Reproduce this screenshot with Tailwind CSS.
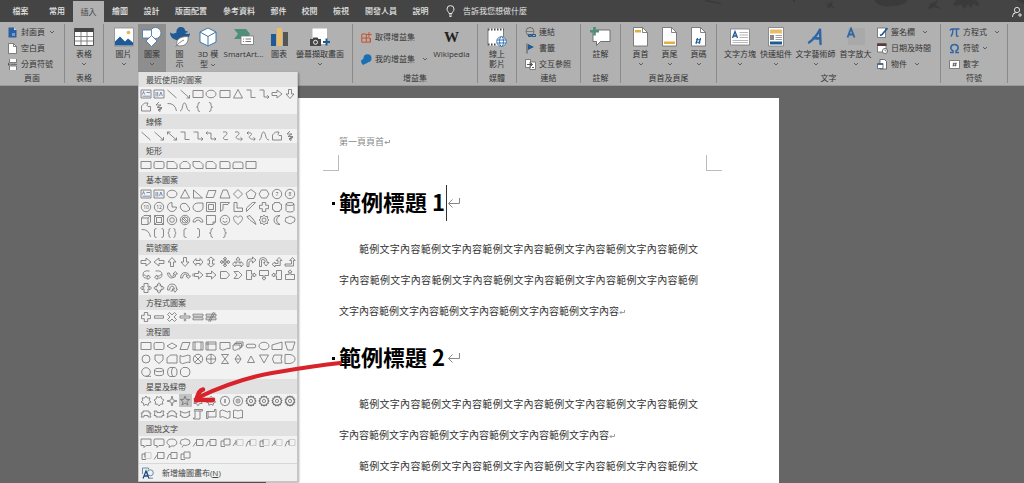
<!DOCTYPE html>
<html lang="zh-Hant">
<head>
<meta charset="utf-8">
<title>Word</title>
<script src="https://cdn.jsdelivr.net/npm/@tailwindcss/browser@4"></script>
</head>
<body class="h-screen overflow-hidden flex flex-col bg-[#666] text-[8px] leading-[10px] text-[#333] font-['Open_Sans','Noto_Sans_CJK_TC',sans-serif]">

<!-- shared chevron -->
<svg class="hidden"><symbol id="chev" viewBox="0 0 6 4"><path d="M1 1l2 2 2-2" fill="none" stroke="#555" stroke-width=".9"/></symbol></svg>

<header class="relative flex shrink-0 h-[22px] items-stretch bg-[#444] text-[#e4e4e4] overflow-hidden">
  <nav class="flex">
    <button class="w-[41px] font-medium">檔案</button>
    <button class="w-8 font-medium">常用</button>
    <button class="w-[31px] mt-px bg-[#b1b1b1] text-[#444]">插入</button>
    <button class="w-8 font-medium">繪圖</button>
    <button class="w-[31px] font-medium">設計</button>
    <button class="w-12 font-medium">版面配置</button>
    <button class="w-12 font-medium">參考資料</button>
    <button class="w-[31px] font-medium">郵件</button>
    <button class="w-[31px] font-medium">校閱</button>
    <button class="w-8 font-medium">檢視</button>
    <button class="w-12 font-medium">開發人員</button>
    <button class="w-[31px] font-medium">說明</button>
  </nav>
  <button class="flex items-center gap-2 ml-[10px]">
    <svg class="w-[9px] h-3" viewBox="0 0 9 12" fill="none" stroke="#e8e8e8"><path d="M3 8.5C3 7 1 6.2 1 4.1a3.5 3.5 0 0 1 7 0C8 6.200 6 7 6 8.500zM3 10h3M3.500 11.500h2"/></svg>
    <span>告訴我您想做什麼</span>
  </button>
  <svg class="ml-auto w-[320px] h-[22px]" viewBox="0 0 320 22" fill="#3a3a3a">
    <path d="M2 0l16 3-2 1L0 1zM88 0h3v3zM120 2l4 2 5-3-1 4 3 3-4-1-4 1 1-3zM170 0q5 8 18 6 12 0 16-6zM219 0l7 4 8-4-2 5 5 4-4-1-3-1-4 2-2-1 2-4zM249 5l3-5h20l4 5-4 1-2-3-3 5-3-4-4 5-3-5-4 2zM312 0h8v4z"/>
    <g fill="none" stroke="#ddd" stroke-width="1"><circle cx="313" cy="10" r="2.600"/><path d="M308.500 17c0-3 2-4.500 4.500-4.500M314 15h4M316 13v4M311 13l-2 1"/></g>
  </svg>
</header>

<section class="relative z-10 flex shrink-0 h-16 pt-0.5 pb-0.5 bg-[#b1b1b1] border-b border-[#9a9a9a] text-center whitespace-nowrap">

  <div class="flex flex-col w-[65px] border-r border-[#8a8a8a]">
    <div class="h-[51px] flex flex-col pl-2 text-left">
      <button class="h-4 flex items-center gap-1"><svg class="w-[9px] h-[11px]" viewBox="0 0 9 11"><path d="M.5.5h5.500l2.500 2.500v7.500h-8z" fill="#2b5f9e"/><path d="M6 .5V3h2.500z" fill="#cfe0f2"/><path d="M4 6h3v3H4z" fill="#6f9bd0"/></svg>封面頁<svg class="w-1.5 h-1"><use href="#chev"/></svg></button>
      <button class="h-4 flex items-center gap-1"><svg class="w-[9px] h-[11px]" viewBox="0 0 9 11"><path d="M.5.5h5l3 3v7h-8z" fill="#fff" stroke="#666" stroke-width=".8"/><path d="M5.500.5v3h3" fill="none" stroke="#666" stroke-width=".8"/></svg>空白頁</button>
      <button class="h-4 flex items-center gap-1"><svg class="w-[9px] h-[11px]" viewBox="0 0 9 11"><path d="M1.500 0v3.500h7V0M1.500 11V7h7v4" fill="#fff" stroke="#666" stroke-width=".8"/><path d="M2.500 5.300H9" stroke="#666"/><path d="M0 3.500l2 1.800-2 1.800z" fill="#555"/></svg>分頁符號</button>
    </div>
    <div>頁面</div>
  </div>

  <div class="flex flex-col w-[39px] border-r border-[#8a8a8a]">
    <button class="h-[51px] pt-[3px] flex flex-col items-center">
      <svg class="w-5 h-5 mb-0.5" viewBox="0 0 20 20"><path d="M.5 1.500h19v17H.5z" fill="#fff" stroke="#555"/><path d="M.5 1h19v4H.5z" fill="#444"/><path d="M1 9.500h18M1 14h18M7 5v13M13 5v13" stroke="#777" stroke-width=".9"/></svg>
      表格<svg class="w-1.5 h-1 mt-[3px]"><use href="#chev"/></svg></button>
    <div>表格</div>
  </div>

  <div class="flex flex-col w-[249px] border-r border-[#8a8a8a]">
    <div class="h-[51px] flex pl-[5px]">
      <button class="w-[29px] pt-[3px] flex flex-col items-center">
        <svg class="w-5 h-5 mb-0.5" viewBox="0 0 20 20"><path d="M.5 1h19v18H.5z" fill="#fff" stroke="#888" stroke-width=".8"/><path d="M1 18.500v-4l5-5 5 5 3-3 5 4v3z" fill="#1f5a94"/><circle cx="14.500" cy="5.500" r="1.800" fill="#e9b44a"/></svg>
        圖片<svg class="w-1.5 h-1 mt-[3px]"><use href="#chev"/></svg></button>
      <div class="relative">
        <button class="w-7 h-12 pt-[3px] flex flex-col items-center bg-[#8e8e8e]" aria-expanded="true">
          <svg class="w-5 h-5 mb-0.5" viewBox="0 0 20 20" fill="#fff" stroke="#4d7ba8" stroke-width=".9"><circle cx="13.500" cy="6" r="5.500"/><path d="M.5 3h9v8h-9z"/><path d="M9.500 8.500l5.500 5.500-5.500 5.500L4 14z"/></svg>
          圖案<svg class="w-1.5 h-1 mt-[3px]"><use href="#chev"/></svg></button>

        <!-- shapes gallery -->
        <div class="absolute left-0 top-12 w-[160px] bg-[#f2f2f2] border border-t-0 border-[#c6c6c6] shadow-[1px_1px_2px_#0005] text-left">
          <div id="gallery"></div>
          <button class="flex items-center gap-2 w-full h-[18px] px-[3px] border-t border-[#d8d8d8] bg-[#f0f0f0] text-[#444]">
            <svg class="w-3 h-3" viewBox="0 0 12 12" fill="none" stroke="#5b7fa8" stroke-width=".9"><path d="M.5 7V1h6v1.500"/><circle cx="8.300" cy="5.800" r="3"/><path d="M1 11.500L4 4l3 7.500M2 9h4" stroke="#1f4e85" stroke-width="1.300"/><path d="M7 11.200h4"/></svg>
            <span>新增繪圖畫布(<u>N</u>)</span>
          </button>
        </div>
      </div>
      <button class="w-[27px] pt-[3px] flex flex-col items-center">
        <svg class="w-5 h-5 mb-0.5" viewBox="0 0 20 20"><path d="M0 5.500C2 7 4 7 6.500 5.500 6 2 8.500 0 11 0s4 1.500 4 3.500L18.500 5 15 6q1 1 3 1c1 0 1.500-.5 2-1 0 4-3 7-8 7.500C5 14 0 11 0 5.500z" fill="#1f5a94"/><path d="M7 18.500C5.500 13 9 9.500 18 9.500c1 6-3 11-11 9M5.500 20c2-3 5-5.500 8.500-7" fill="#fff" stroke="#777" stroke-width=".9"/></svg>
        <span>圖<br>示</span></button>
      <button class="w-[30px] pt-[3px] flex flex-col items-center">
        <svg class="w-5 h-5 mb-0.5" viewBox="0 0 20 20" fill="#fff" stroke="#3a76a8" stroke-width="1"><path d="M10 1l8 4v10l-8 4-8-4V5z"/><path d="M2 5l8 4.500L18 5M10 9.500V19" fill="none"/></svg>
        <span>3D 模<br>型 <svg class="w-1.5 h-1 inline-block align-middle"><use href="#chev"/></svg></span></button>
      <button class="w-[41px] pt-[3px] flex flex-col items-center">
        <svg class="w-5 h-5 mb-0.5" viewBox="0 0 20 20"><path d="M0 2h12l4 5-3 5H0l4-5z" fill="#4f8f77"/><path d="M7 9h12.500v8.500H7z" fill="#fff" stroke="#777" stroke-width=".8"/><path d="M9 12h1M11.500 12H17M9 14.500h1M11.500 14.500H17" stroke="#777"/></svg>
        SmartArt...</button>
      <button class="w-[30px] pt-[3px] flex flex-col items-center">
        <svg class="w-5 h-5 mb-0.5" viewBox="0 0 20 20"><path d="M2 7h5v12H2z" fill="#1f5a94"/><path d="M8 1h5v18H8z" fill="#e8bd6a"/><path d="M14 5h5v14h-5z" fill="#555"/></svg>
        圖表</button>
      <button class="w-[52px] pt-[3px] flex flex-col items-center">
        <svg class="w-5 h-5 mb-0.5" viewBox="0 0 20 20"><path d="M2.500 1.500H17V17H2.500z" fill="#fff"/><path d="M0 12h2.500l1-1.500h4L8.500 12H11v7H0z" fill="#444"/><circle cx="5.500" cy="15.300" r="2" fill="#444" stroke="#fff" stroke-width=".9"/><path d="M16.500 11.500v7M13 15h7" stroke="#1f5a94" stroke-width="2"/></svg>
        螢幕擷取畫面<svg class="w-1.5 h-1 mt-[3px]"><use href="#chev"/></svg></button>
    </div>
  </div>

  <div class="flex flex-col w-[125px] border-r border-[#8a8a8a]">
    <div class="h-[51px] flex pl-2">
      <div class="flex flex-col pt-0.5 text-left w-[70px]">
        <button class="h-[22px] flex items-center gap-[3px]"><svg class="w-[11px] h-[11px]" viewBox="0 0 11 11" fill="none" stroke="#c8512c" stroke-width="1"><path d="M.8 2h4.500v8.200H.8zM.8 6h8.500v4.200H5.300M9.300 6v4.200M8 0v5M5.700 2.500h5"/></svg>取得增益集</button>
        <button class="h-[22px] flex items-center gap-[3px]"><svg class="w-[11px] h-[11px]" viewBox="0 0 11 11" fill="#1a6fb5"><circle cx="6.500" cy="4.300" r="4"/><path d="M0 6.500l4-3 3 5-5 2.500q-2-1-2-4.500"/></svg>我的增益集<svg class="w-1.5 h-1 ml-1"><use href="#chev"/></svg></button>
      </div>
      <button class="w-[41px] pt-[3px] flex flex-col items-center">
        <span class="h-5 mb-0.5 leading-5 text-[15px] font-bold text-[#222] font-['Liberation_Serif',serif]">W</span>
        Wikipedia</button>
    </div>
    <div>增益集</div>
  </div>

  <div class="flex flex-col w-[39px] border-r border-[#8a8a8a]">
    <button class="h-[51px] pt-[3px] flex flex-col items-center">
      <svg class="w-5 h-5 mb-0.5" viewBox="0 0 20 20"><path d="M1 1.500h15.500v17H1z" fill="#fff"/><path d="M1 2.500h16M1 17.500h9" stroke="#444" stroke-width="2" stroke-dasharray="1.500 1.500"/><path d="M1 1.500v17M16.500 1.500v9" stroke="#666" stroke-width=".8"/><g fill="#fff" stroke="#2f6ca8" stroke-width=".9"><circle cx="14.500" cy="14.500" r="4.800"/><ellipse cx="14.500" cy="14.500" rx="2" ry="4.800"/><path d="M10 13h9M10 16h9" /></g></svg>
      <span>線上<br>影片</span></button>
    <div>媒體</div>
  </div>

  <div class="flex flex-col w-16 border-r border-[#8a8a8a]">
    <div class="h-[51px] flex flex-col pl-2 text-left">
      <button class="h-4 flex items-center gap-[3px]"><svg class="w-[11px] h-[11px]" viewBox="0 0 11 11" fill="none"><circle cx="5" cy="4.500" r="4" fill="#ddd" stroke="#555" stroke-width=".8"/><path d="M1 4.500h8M5 .5v8M3 1v7M7 1v7" stroke="#555" stroke-width=".6"/><path d="M3.500 7.500h3v2h-3zM7.500 7.500h3v2h-3z" stroke="#1f5a94" stroke-width="1"/></svg>連結</button>
      <button class="h-4 flex items-center gap-[3px]"><svg class="w-[11px] h-[11px]" viewBox="0 0 11 11"><path d="M2 .5v10" stroke="#555"/><path d="M3 1l6 3-6 3z" fill="#1f5a94"/></svg>書籤</button>
      <button class="h-4 flex items-center gap-[3px]"><svg class="w-[11px] h-[11px]" viewBox="0 0 11 11" fill="#fff" stroke="#666" stroke-width=".8"><path d="M.5.5h5v8h-5zM5 3h5.500v7.500H5z"/><path d="M2 5.500h5.500M6 4l1.500 1.500L6 7M7 8.500h2" stroke="#333"/></svg>交互參照</button>
    </div>
    <div>連結</div>
  </div>

  <div class="flex flex-col w-10 border-r border-[#8a8a8a]">
    <button class="h-[51px] pt-[3px] flex flex-col items-center">
      <svg class="w-[21px] h-5 mb-0.5" viewBox="0 0 21 20"><path d="M3 3h17v11.500H10.500L6.500 18.500v-4H3z" fill="#fff" stroke="#666" stroke-width=".9"/><path d="M4.500 0v8.500M0 4.200h9" stroke="#4f8f77" stroke-width="2.600"/></svg>
      註解</button>
    <div>註解</div>
  </div>

  <div class="flex flex-col w-24 border-r border-[#8a8a8a]">
    <div class="h-[51px] flex pl-[5px]">
      <button class="w-[29px] pt-[3px] flex flex-col items-center">
        <svg class="w-[15px] h-5 mb-0.5" viewBox="0 0 15 20"><path d="M.5.5h9l5 5v13.500H.5z" fill="#fff" stroke="#666" stroke-width=".8"/><path d="M9.500.5v5h5" fill="none" stroke="#666" stroke-width=".8"/><path d="M2 3h6v2.500H2z" fill="#e0b040"/></svg>
        頁首<svg class="w-1.5 h-1 mt-[3px]"><use href="#chev"/></svg></button>
      <button class="w-[29px] pt-[3px] flex flex-col items-center">
        <svg class="w-[15px] h-5 mb-0.5" viewBox="0 0 15 20"><path d="M.5.5h9l5 5v13.500H.5z" fill="#fff" stroke="#666" stroke-width=".8"/><path d="M9.500.5v5h5" fill="none" stroke="#666" stroke-width=".8"/><path d="M2 14.500h11V17H2z" fill="#e0b040"/></svg>
        頁尾<svg class="w-1.5 h-1 mt-[3px]"><use href="#chev"/></svg></button>
      <button class="w-[29px] pt-[3px] flex flex-col items-center">
        <svg class="w-[15px] h-5 mb-0.5" viewBox="0 0 15 20"><path d="M.5.5h9l5 5v13.500H.5z" fill="#fff" stroke="#666" stroke-width=".8"/><path d="M9.500.5v5h5" fill="none" stroke="#666" stroke-width=".8"/><path d="M6.500 11L5 17M9.500 11L8 17M5 12.800h5M4.500 15.200h5" stroke="#1f5a94" stroke-width="1.100"/></svg>
        頁碼<svg class="w-1.5 h-1 mt-[3px]"><use href="#chev"/></svg></button>
    </div>
    <div>頁首及頁尾</div>
  </div>

  <div class="flex flex-col w-56 border-r border-[#8a8a8a]">
    <div class="h-[51px] flex pl-[5px]">
      <button class="w-9 pt-[3px] flex flex-col items-center">
        <svg class="w-5 h-5 mb-0.5" viewBox="0 0 20 20"><path d="M.5 2h19v16H.5z" fill="#fff" stroke="#777" stroke-width=".8"/><path d="M2.500 11L5 4.500 7.500 11M3.500 9h3" fill="none" stroke="#1f5a94" stroke-width="1.300"/><path d="M9.500 5.500H18M9.500 8H18M9.500 10.500H18M2.500 13.500H18M2.500 15.500H18" stroke="#999" stroke-width=".7"/></svg>
        文字方塊<svg class="w-1.5 h-1 mt-[3px]"><use href="#chev"/></svg></button>
      <button class="w-9 pt-[3px] flex flex-col items-center">
        <svg class="w-4 h-5 mb-0.5" viewBox="0 0 16 20"><path d="M.5.5h15v18.500H.5z" fill="#fff" stroke="#777" stroke-width=".8"/><path d="M2 2.500h12v4H2z" fill="#e8bd6a"/><path d="M2 8h4v5H2z" fill="#888"/><path d="M7.500 8.500H14M7.500 10.500H14M7.500 12.500H14" stroke="#888" stroke-width=".8"/><path d="M2 14.500h12v3H2z" fill="#1f5a94"/></svg>
        快速組件<svg class="w-1.5 h-1 mt-[3px]"><use href="#chev"/></svg></button>
      <button class="w-[43px] pt-[3px] flex flex-col items-center">
        <svg class="w-5 h-5 mb-0.5" viewBox="0 0 20 20"><path d="M3 15.500C7 13 11 8 14 2.500l.5 14.500M7.500 11c3 .5 4 .5 7 .5" fill="none" stroke="#2f66a3" stroke-width="2.400" stroke-linecap="round" stroke-linejoin="round"/></svg>
        文字藝術師<svg class="w-1.5 h-1 mt-[3px]"><use href="#chev"/></svg></button>
      <button class="w-[37px] pt-[3px] flex flex-col items-center">
        <svg class="w-5 h-5 mb-0.5" viewBox="0 0 20 20"><path d="M2 1h17v17H2z" fill="#a9a9a9"/><path d="M1.500 10.500l3.500-9 3.500 9M2.800 7.500h4.400" fill="none" stroke="#2f66a3" stroke-width="1.800"/></svg>
        首字放大<svg class="w-1.5 h-1 mt-[3px]"><use href="#chev"/></svg></button>
      <div class="flex flex-col pl-[3px] text-left">
        <button class="h-4 flex items-center gap-[3px]"><svg class="w-[11px] h-[11px]" viewBox="0 0 11 11"><path d="M.5 1h8v9.500h-8z" fill="#fff" stroke="#666" stroke-width=".8"/><path d="M10.500 1L5 7.500l-2 1" fill="none" stroke="#1f5a94" stroke-width="1.600"/></svg>簽名欄<svg class="w-1.5 h-1 ml-1"><use href="#chev"/></svg></button>
        <button class="h-4 flex items-center gap-[3px]"><svg class="w-[11px] h-[11px]" viewBox="0 0 11 11" fill="#fff"><path d="M.5.8h8.500V9H.5z" stroke="#666" stroke-width=".8"/><path d="M.1.4H9.400V3H.1z" fill="#5a3a34"/><circle cx="8" cy="8" r="2.600" stroke="#555" stroke-width=".8"/><path d="M8 6.500V8h1.500" fill="none" stroke="#555" stroke-width=".7"/></svg>日期及時間</button>
        <button class="h-4 flex items-center gap-[3px]"><svg class="w-[11px] h-[11px]" viewBox="0 0 11 11" fill="#fff" stroke="#555" stroke-width=".8"><path d="M3 .5h4.500l2 2V10H3z"/><path d="M.5 4.500H6v5H.5z"/><path d="M.5 5.200H6" stroke="#1f5a94" stroke-width="1.300"/></svg>物件<svg class="w-1.5 h-1 ml-1"><use href="#chev"/></svg></button>
      </div>
    </div>
    <div>文字</div>
  </div>

  <div class="flex flex-col w-[67px] border-r border-[#8a8a8a]">
    <div class="h-[51px] flex flex-col pl-2 text-left">
      <button class="h-4 flex items-center gap-[3px]"><svg class="w-[11px] h-[11px]" viewBox="0 0 11 11" fill="none" stroke="#2f66a3" stroke-width="1.400"><path d="M1 3.500q.5-1.500 2-1.500h7.500M4 2q0 5-2 7.500M7.500 2v6q0 1.500 2 1.300"/></svg>方程式<svg class="w-1.5 h-1 ml-1"><use href="#chev"/></svg></button>
      <button class="h-4 flex items-center gap-[3px]"><svg class="w-[11px] h-[11px]" viewBox="0 0 11 11" fill="none" stroke="#2f66a3" stroke-width="1.500"><path d="M1 9.500h3V8C.5 6 1.500 1.500 5.500 1.500S10.500 6 7 8v1.500h3"/></svg>符號<svg class="w-1.5 h-1"><use href="#chev"/></svg></button>
      <button class="h-4 flex items-center gap-[3px]"><svg class="w-[11px] h-[11px]" viewBox="0 0 11 11"><path d="M.5 1.500h10v8H.5z" fill="#fff" stroke="#666" stroke-width=".8"/><path d="M5 3.500l-.8 4M7 3.500l-.8 4M3.800 4.700h4M3.500 6.300h4" stroke="#444" stroke-width=".7"/></svg>數字</button>
    </div>
    <div>符號</div>
  </div>
</section>

<main class="flex-1 min-h-0 flex justify-center items-start pt-3 pl-[21px] overflow-hidden">
  <article class="w-[513px] shrink-0 min-h-full bg-white pt-[38px] text-[#333]">
    <div class="pl-[73px] h-3 flex items-center text-[9px] text-[#888]">第一頁頁首<svg class="w-1.5 h-1.5" viewBox="0 0 6 6" fill="none" stroke="#888" stroke-width=".8"><path d="M5.500 1v2.500H1M2.500 2L1 3.500 2.500 5"/></svg></div>
    <div class="mt-[7px] px-[57px] flex justify-between">
      <div class="w-4 h-4 border-r border-b border-[#bbb]"></div>
      <div class="w-4 h-4 border-l border-b border-[#bbb]"></div>
    </div>
    <h1 class="mt-[14px] pl-[66px] h-9 flex items-center text-[22px] leading-8 font-bold text-black font-['Noto_Sans_CJK_TC',sans-serif]">
      <span class="w-[3px] h-[3px] mr-1 bg-black"></span><span class="pb-1">範例標題 1</span><span class="w-px h-9 ml-px bg-[#333]"></span>
      <svg class="w-[14px] h-3" viewBox="0 0 14 12" fill="none" stroke="#888" stroke-width="1"><path d="M12.500 1v5.500H1.500M5.500 2.500l-4 4 4 4"/></svg></h1>
    <p class="mt-[13px] ml-[73px] w-[359px] text-justify indent-5 text-[10px] leading-[31px]">範例文字內容範例文字內容範例文字內容範例文字內容範例文字內容範例文字內容範例文字內容範例文字內容範例文字內容範例文字內容範例文字內容範例文字內容範例文字內容範例文字內容範例文字內容範例文字內容<svg class="inline-block w-1.5 h-1.5" viewBox="0 0 6 6" fill="none" stroke="#888" stroke-width=".8"><path d="M5.500 1v2.500H1M2.500 2L1 3.500 2.500 5"/></svg></p>
    <h1 class="mt-[13px] pl-[66px] h-9 flex items-center text-[22px] leading-8 font-bold text-black font-['Noto_Sans_CJK_TC',sans-serif]">
      <span class="w-[3px] h-[3px] mr-1 bg-black"></span><span class="pb-1">範例標題 2</span>
      <svg class="w-[14px] h-3 ml-0.5" viewBox="0 0 14 12" fill="none" stroke="#888" stroke-width="1"><path d="M12.500 1v5.500H1.500M5.500 2.500l-4 4 4 4"/></svg></h1>
    <p class="mt-[13px] ml-[73px] w-[359px] text-justify indent-5 text-[10px] leading-[31px]">範例文字內容範例文字內容範例文字內容範例文字內容範例文字內容範例文字內容範例文字內容範例文字內容範例文字內容範例文字內容<svg class="inline-block w-1.5 h-1.5" viewBox="0 0 6 6" fill="none" stroke="#888" stroke-width=".8"><path d="M5.500 1v2.500H1M2.500 2L1 3.500 2.500 5"/></svg></p>
    <p class="ml-[73px] w-[359px] text-justify [text-align-last:justify] indent-5 text-[10px] leading-[31px]">範例文字內容範例文字內容範例文字內容範例文字內容範例文字內容範例文</p>
  </article>
</main>

<!-- hand-drawn pointer to the five-point star -->
<svg class="absolute z-20 left-[190px] top-[355px] w-[160px] h-[52px] pointer-events-none" viewBox="190 355 160 52" fill="none" stroke="#d8232a" stroke-linecap="round" stroke-linejoin="round"><path d="M340 363C312 366 290 370 272 373 244 378 220 387 197 398" stroke-width="4"/><path d="M203 389.500C199 390 198 395 196 400.500 202 398.500 208 401 213 400" stroke-width="4.500"/></svg>

<script>
// Shape outlines on a 12x12 grid; markup strings are used for multi-element shapes.
const pts = (n, r1, r2, off = -90) => {
  const a = [];
  for (let i = 0; i < n * 2; i++) {
    const r = i % 2 ? r2 : r1, t = (off + i * 180 / n) * Math.PI / 180;
    a.push((6 + r * Math.cos(t)).toFixed(2) + ' ' + (6 + r * Math.sin(t)).toFixed(2));
  }
  return 'M' + a.join('L') + 'z';
};
const c = (r, x = 6, y = 6) => `M${x - r} ${y}a${r} ${r} 0 1 0 ${2 * r} 0a${r} ${r} 0 1 0 ${-2 * r} 0z`;
const label = (r, t) => `<path d="${c(r)}"/><text x="6" y="7.800" font-size="5" text-anchor="middle" fill="#555" stroke="none">${t}</text>`;
const seal = n => `<path stroke-width="1.100" d="${pts(n, 4.900, 4)}"/><path d="${c(1.600)}"/>`;
const P = {
  txt: '<path d="M1 2h10v8H1z"/><path d="M2.300 6.500l1.200-3 1.200 3M6.500 4.500H10M2.500 8.200H10" stroke="#4a6a9a" stroke-width=".7"/>',
  vtxt: '<path d="M1 2h10v8H1z"/><path d="M6.500 8l1.400-4 1.400 4M3 4v4.500M4.700 4v4.500" stroke="#4a6a9a" stroke-width=".7"/>',
  line: 'M1.500 2l9 8', arrow: 'M1.500 2l9 8M10.500 7v3h-3', darrow: 'M1.500 2l9 8M10.500 7.500v2.500h-3M1.500 4.500V2h3',
  rect: 'M1 2.500h10v7H1z', rrect: 'M2.500 2.500h7q1.500 0 1.500 1.500v4q0 1.500-1.500 1.500h-7Q1 9.500 1 8V4q0-1.500 1.500-1.500z',
  oval: 'M1 6a5 3.800 0 1 0 10 0a5 3.800 0 1 0-10 0z', tri: 'M6 1.500L10.500 10h-9z',
  elbow: 'M1.500 2H6v7.500h4.500', elbowA: 'M1.500 2H6v7h5M9.200 7.200L11 9l-1.800 1.800', elbowD: 'M1 3h5v6h5M9.500 7.500L11 9l-1.500 1.500M2.500 1.500L1 3l1.500 1.500',
  cc: 'M4 2c6-1 4 3 2 4S3 10.500 9 9.500', cca: 'M3 2c6-1 4 3 2 4s-1 4 5 3M8.500 7.300L10.500 9 8.500 10.800', ccd: 'M2 3c6-1 5 2 3 3s0 4 5 3M8.500 7.500L10.300 9 8.500 10.600M3.500 1.500L2 3l1.500 1.500',
  rA: 'M1 4.500h5V2l5 4-5 4V7.500H1z', lA: 'M11 4.500H6V2L1 6l5 4V7.500h5z', uA: 'M4.500 10.500V6H2l4-4.500L10 6H7.500v4.500z', dA: 'M4.500 1.500V6H2l4 4.500L10 6H7.500V1.500z',
  free: 'M1.500 10V5L4.500 2H8Q6 5 8 5.500H10.500V10z', scrib: 'M6 1L3 4h5L4 6.500h5L5 9l4-1.500M7 7v3.500L5 9',
  arc: 'M1.500 2.500Q9 2 10.500 10', curve: 'M1 10C4 10 3 2 5.500 2S7 10 11 10',
  lb: 'M8 1.500Q6 1.500 6 3v1.500Q6 6 4.500 6 6 6 6 7.500V9q0 1.500 2 1.500', rb: 'M4 1.500q2 0 2 1.500v1.500Q6 6 7.500 6 6 6 6 7.500V9q0 1.500-2 1.500',
  snip1: 'M1 2.500h7l3 3v4H1z', snip2: 'M4 2.500h4l3 3v4H1v-4z', snipd: 'M1 2.500h7l3 3v4H4L1 7z', snipr: 'M3 2.500h5l3 3v4H1V4.500Q1 2.500 3 2.500z',
  round1: 'M1 2.500h8q2 0 2 2v5H1z', round2: 'M3 3h6q2 0 2 2v4.500H1V5q0-2 2-2z',
  rtri: 'M1.500 2v8h9z', para: 'M3.500 2.500H11l-2.500 7H1z', trap: 'M4 2h4l3 8H1z', dia: 'M6 1.500L10.500 6 6 10.500 1.500 6z',
  pent: 'M6 1.500L11 5.200 9 10.500H3L1 5.200z', hex: 'M3.500 2h5L11 6 8.500 10h-5L1 6z',
  pie: 'M6 6h4.500A4.500 4.500 0 1 1 6 1.500z', chord: 'M3 2.500h4L10.500 7v2q-3 2.500-6.500 1Q-1 6 3 2.500z', tear: 'M6 2h5v4a5 4.300 0 1 1-5-4z',
  frame: 'M1.500 1.500h9v9h-9zM3.500 3.500v5h5v-5z', half: 'M1.500 1.500h9l-1.500 2H4v5l-2.500 2z', L: 'M2 1.500h3V7h5.500v3.500H2z', stripe: 'M1.500 7L7.500 1.500h3l-9 9z',
  plus: 'M4.300 1.500h3.400v2.800h2.800v3.400H7.700v2.800H4.300V7.700H1.500V4.300h2.800z', plaque: 'M3.500 1.500h5q0 2 2 2v5q-2 0-2 2h-5q0-2-2-2v-5q2 0 2-2z',
  can: 'M2 3a4 1.500 0 1 1 8 0v6.500a4 1.500 0 0 1-8 0zM2 3a4 1.500 0 0 0 8 0', cube: 'M1.500 4l2.500-2.500h6.500V8L8 10.500H1.500zM1.500 4H8v6.500M8 4l2.500-2.500',
  bevel: 'M1.500 1.500h9v9h-9zM3.500 3.500h5v5h-5zM1.500 1.500l2 2M10.500 1.500l-2 2M1.500 10.500l2-2M10.500 10.500l-2-2',
  donut: c(4.7) + c(2.3), no: c(4.7) + c(3) + 'M3.500 4.500l4 4M4.500 3.500l4 4', block: 'M1 8a5 4.500 0 0 1 10 0H8.500a2.500 2 0 0 0-5 0z',
  fold: 'M1.500 1.500h9V8L8 10.500H1.500zM8 10.500V8h2.500', smile: c(4.700) + 'M3.500 7q2.500 3 5 0M4.300 4v1M7.700 4v1', heart: 'M6 10.500C0 6 1 2 3.500 2 5 2 6 3.500 6 3.500S7 2 8.500 2C11 2 12 6 6 10.500z',
  bolt: 'M2 2.500L5 1.500l2 3 1 .3 1 2 .5.200 1.500 3.500-4-3-.8-.5L4.500 5.500 3.800 5z', sun: pts(8, 5, 3.600) + c(2), moon: 'M9 1.500Q3 1.500 3 6t6 4.500Q5.500 9 5.500 6T9 1.500z',
  cloud: 'M3 8.500Q0 8 1.500 5.500 1 3 4 3.300 6 1 8 3q3-.5 3 2.500 0 3-2.500 3Q7 10.500 5 9.500z',
  dbk: 'M3.500 1.500Q1.500 1.500 1.500 3v6q0 1.500 2 1.500M8.500 1.500q2 0 2 1.500v6q0 1.500-2 1.500', dbr: 'M4.500 1.500Q3 1.500 3 3v1.500L2 6l1 1.500V9q0 1.500 1.500 1.500M7.500 1.500Q9 1.500 9 3v1.500L10 6 9 7.500V9q0 1.500-1.500 1.500',
  lk: 'M7.500 1.500Q5 1.500 5 3v6q0 1.500 2.500 1.500', rk: 'M5 1.500q2.500 0 2.500 1.500v6q0 1.500-2.500 1.500',
  lr: 'M1 6l3-3.500v2h4v-2L11 6 8 9.500v-2H4v2z', ud: 'M6 1l3.500 3h-2v4h2L6 11 2.500 8h2V4h-2z',
  quad: 'M6 1l1.700 2H6.600v2.400H9V4.300L11 6 9 7.700V6.600H6.600V9h1.100L6 11 4.300 9h1.100V6.600H3v1.100L1 6l2-1.700v1.100h2.400V3H4.300z',
  tri3: 'M6 1l2 2.500H7V7h2V5.500l2.500 2.700L9 11V9.300H3V11L.5 8.200 3 5.500V7h2V3.500H4z', bent: 'M2 10.500V6q0-3 3-3h2.500V1l3.500 3-3.500 3V5H5.500Q4 5 4 6.500v4z',
  uturn: 'M1.500 10.500V5q0-3.500 3.500-3.500T9 5v1.500h2L8 10 5.500 6.500H7V5q0-1.500-2-1.500T3.500 5v5.500z', lup: 'M8 1.500L11 4.500H9.200v5H4V11L1 8.300 4 6v1.500h3v-3H5.300z', bup: 'M8.500 1.500L11.200 4.500H9.500v5.500H1V8h6.500V4.500H5.700z',
  cr: 'M9.500 2Q3 1 3 5.500T8 9v1.500L10.500 8 8 6v1.500Q5 7.500 3.500 5', cl: 'M2.500 2Q9 1 9 5.500T4 9v1.500L1.500 8 4 6v1.500Q7 7.500 8.500 5', cu: 'M1.500 4Q2 9 6 9t4-4h1.500L9.300 2.500 7 5h1.500Q8 7.500 6 7.500T3.500 4z', cd: 'M1.500 9Q2 3.500 6 3.500T10 7h1.500L9.300 9.500 7 7h1.500Q8 5 6 5T3.500 9z',
  strip: 'M1 4.500v3M2.500 4.500h4V2L11 6 6.500 10V7.500h-4z', notch: 'M1 4.500h5.500V2L11 6 6.500 10V7.500H1L2.500 6z', home: 'M1.500 2.500h6L10.500 6l-3 3.500h-6z', chev: 'M2 2.500h4.500L10 6 6.500 9.500H2L5 6z',
  rc: 'M1.500 1.500h5v3.700H9V4l2.300 2L9 8V6.800H6.500v3.700h-5z', dc: 'M1.500 1.500h9v5H6.800V9H8l-2 2.200L4 9h1.200V6.500H1.500z', lc: 'M10.500 1.500h-5v3.700H3V4L.7 6 3 8V6.800h2.500v3.700h5z', uc: 'M1.500 10.500h9v-5H6.800V3H8L6 .8 4 3h1.200v2.500H1.500z',
  lrc: 'M4 1.500h4v3.700h1.500V4l2 2-2 2V6.800H8v3.700H4V6.800H2.500V8l-2-2 2-2v1.200H4z', qc: 'M6 .8l1.800 1.700H7v1.200h1.300V5h1.200v-.8L11.200 6 9.500 7.800V7H8.300v1.300H7v1.200h.8L6 11.200 4.200 9.500H5V8.300H3.700V7H2.500v.8L.8 6l1.700-1.800V5h1.200V3.700H5V2.500h-.8z', circ: 'M1.500 8Q1.500 2 6 2t4.500 5h1L9 10.300 7 7h1.500Q8 4 6 4T3.500 8zM4.500 9h2V6.500',
  minus: 'M1.500 4.800h9v2.400h-9z', times: 'M3.500 1.500L6 4l2.500-2.500 2 2L8 6l2.500 2.500-2 2L6 8l-2.500 2.500-2-2L4 6 1.500 3.500z', div: 'M1 5h10v2H1z' + c(.9, 6, 3) + c(.9, 6, 9), eq: 'M1 3.200h10v2H1zM1 6.800h10v2H1z', neq: 'M1 3.200h10v2H1zM1 6.800h10v2H1zM8.500 1l-5 9.500M10 1.500L5 11',
  fd: 'M6 3l5 3-5 3-5-3z', pre: 'M1 2h10v8H1zM3 2v8M9 2v8', int: 'M1 2h10v8H1zM3 2v8M1 4h10', doc: 'M1 2.500h10v6q-3-.5-5 1T1 9z', mdoc: 'M1 5h7v4q-2-.5-3.500.8T1 9.500zM2.500 5V3.500h7v4H8M4 3.500V2h7v4H9.500', pill: 'M3 4.200h6a1.800 1.800 0 0 1 0 3.600H3a1.800 1.800 0 0 1 0-3.600z', mi: 'M1 5l10-3v7.500H1z', mo: 'M1 2h10l-2.500 8h-5z',
  circle: c(4), off: 'M2 2h8v5L6 10.500 2 7z', card: 'M4.500 2H11v8H1V5z', tape: 'M1 2.500q2.500 2 5 .5t5-.5v7q-2.500-1-5 .5t-5-.5z', sum: c(4.700) + 'M2.700 2.700l6.600 6.600M9.300 2.700L2.700 9.300', or: c(4.700) + 'M6 1.300v9.400M1.300 6h9.400', coll: 'M2.500 1.500h7l-7 9h7z', sort: 'M6 1.500L9 6l-3 4.500L3 6zM3 6h6', ext: 'M6 3l3.500 6.500h-7z', mer: 'M1.500 2h9L6 10z', sto: 'M3 2h8Q9 6 11 10H3Q0 6 3 2z', del: 'M1 1.500h5q5 1 5 4.500t-5 4.500H1z',
  seq: c(4.300) + 'M6 10.300h5', disk: 'M1.500 4a4.500 1.700 0 1 1 9 0v4a4.500 1.700 0 0 1-9 0zM1.500 4a4.500 1.700 0 0 0 9 0', das: 'M4 1.500h4q3 0 3 4.500t-3 4.500H4Q1.500 10 1.500 6T4 1.500M7.500 1.500Q5.500 2 5.500 6t2 4.500', disp: 'M4 1.500h4q3 1 3 4.500t-3 4.500H4L1.500 8V4z',
  ex1: pts(7, 5, 3.300), ex2: pts(7, 5, 3.500, -65), s4: pts(4, 5, 1.500), s5: pts(5, 5, 2), s6: pts(6, 4.800, 3), s7: pts(7, 4.800, 3.200),
  s8: `<path d="${pts(12, 4.900, 4.300)}"/><path d="M6 4v4" stroke-width="1.200"/>`, s10: `<path d="${pts(12, 4.900, 4.300)}"/><path d="${c(2)}M6 5v2"/>`, s12: seal(12), s16: seal(12), s24: seal(13), s32: seal(14),
  ru: 'M1 5h2V3h6v2h2L10 7l1 2H8V7.500H4V9H1l1-2z', rd: 'M1 3h3v1.500h4V3h3l-1 2 1 2.500H9V9H3V7.500H1L2 5z', cru: 'M1 5.500L3 5V3.500Q6 2 9 3.500V5l2 .5L10 7l1 2.500L8 8Q6 7 4 8L1 9.500 2 7z', crd: 'M1 3l3 1.500q2 1 4 0L11 3l-1 2 1 2.500L9 8v1q-3 1-6 0V8L1 7.500 2 5z',
  vs: 'M3 3V10H1.500v1H8V3h2.500V1.500h-8Q1.500 2.500 3 3h5', hs: 'M1.500 3.500h8V1.500h1.500V9H3v1.500H1.500zM3 3.500V9', wave: 'M1 3q2.500-2 5 0t5 0v6.500q-2.500 2-5 0t-5 0z', dw: 'M1.500 2.500Q3 1.500 4.500 2.500t3 0 3 0v7.500q-1.500-1-3 0t-3 0-3 0z',
  k1: 'M1 2h10v6.500H6L4 10.500v-2H1z', k2: 'M2 2h8q1 0 1 1v4.500q0 1-1 1H6l-2 2v-2H2q-1 0-1-1V3q0-1 1-1z', k3: 'M3.500 8.500C-1 6 1 2 6 2s7 5 2 7H5.500L3 10.500z', k4: 'M3 7.500Q0 7 1.500 4.500 2 2 4.500 2.500 6 1 8 2.500q3 0 3 2.500 0 3-2.500 3Q6 9 4.500 8L3 10.500',
  n1: 'M4.500 2.500H11v6H4.500zM4.500 4.500L1 9.500', n2: 'M5 2.500h6v6H5zM5 4.500H3L1 9.500', n3: 'M5 2h6v6H5zM5 4H2v5.500h4', n4: 'M4 3v5M4 4.500L1 9', n5: 'M5 3v5M5 4.500H3L1 9.500', n6: 'M5 2.500v5M5 4H2v5.500h4'
};
// Borderless callouts carry a faint box edge beside the leader line.
for (const k of ['n4', 'n5', 'n6']) P[k] = `<path stroke="#c4c4c4" d="M5 2.500h6v6H5z"/><path d="${P[k]}"/>`;
for (const [k, t, r] of [['c7', 7, 4.700], ['c8', 8, 4.700], ['c10', 10, 4.700], ['c12', 12, 4.700]]) P[k] = label(r, t);

const sections = [
  ['最近使用的圖案', 'txt vtxt line arrow rect oval rect tri elbow elbowA rA dA free scrib arc curve lb rb'],
  ['線條', 'line arrow darrow elbow elbowA elbowD cc cca ccd curve free scrib'],
  ['矩形', 'rect rrect snip1 snip2 snipd snipr round1 round2 rect'],
  ['基本圖案', 'txt vtxt oval tri rtri para trap dia pent hex c7 c8 c10 c12 pie chord tear frame half L stripe plus plaque can cube bevel donut no block fold smile heart bolt sun moon cloud arc dbk dbr lk rk lb rb'],
  ['箭號圖案', 'rA lA uA dA lr ud quad tri3 bent uturn lup bup cr cl cu cd strip notch home chev rc dc lc uc lrc qc circ'],
  ['方程式圖案', 'plus minus times div eq neq'],
  ['流程圖', 'rect rrect fd para pre int doc mdoc pill oval mi mo circle off card tape sum or coll sort ext mer sto del seq disk das disp'],
  ['星星及綵帶', 'ex1 ex2 s4 s5 s6 s7 s8 s10 s12 s16 s24 s32 ru rd cru crd vs hs wave dw'],
  ['圖說文字', 'k1 k2 k3 k4 n1 n2 n3 n4 n5 n6 n4 n5 n6 n1 n2 n3']
];
document.getElementById('gallery').innerHTML = sections.map(([title, names]) =>
  `<h2 class="h-[15px] pl-[7px] leading-[15px] bg-[#e1e1e1] text-[#444]">${title}</h2><div class="grid grid-cols-12 pb-px">` +
  names.split(' ').map(n => `<button aria-label="${n}" class="h-[13px] flex items-center justify-center ${n === 's5' ? 'bg-[#c2c2c2]' : ''}"><svg class="w-3 h-3" viewBox="0 0 12 12" fill="none" stroke="#707070" stroke-width=".8">${P[n][0] === '<' ? P[n] : `<path d="${P[n]}"/>`}</svg></button>`).join('') + '</div>').join('');
</script>
</body>
</html>
